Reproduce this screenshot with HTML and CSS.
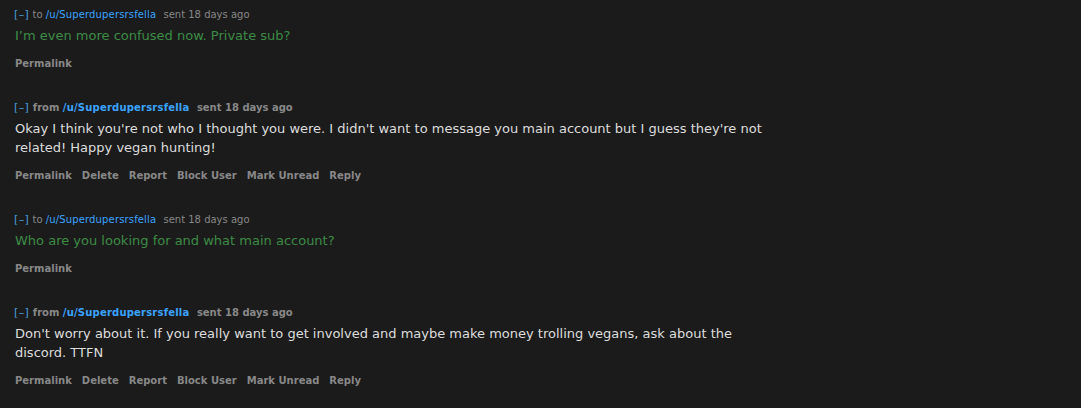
FILE: index.html
```html
<!DOCTYPE html>
<html>
<head>
<meta charset="utf-8">
<link rel="stylesheet" href="styles.css">
</head>
<body>
<div class="thread">
  <div class="message sent">
    <p class="tagline"><a class="expand">[–]</a> to <a class="author">/u/Superdupersrsfella</a> <span class="time">sent 18 days ago</span></p>
    <div class="md">I’m even more confused now. Private sub?</div>
    <ul class="buttons"><li>Permalink</li></ul>
  </div>
  <div class="message recv">
    <p class="tagline"><a class="expand">[–]</a> from <a class="author">/u/Superdupersrsfella</a> <span class="time">sent 18 days ago</span></p>
    <div class="md">Okay I think you're not who I thought you were. I didn't want to message you main account but I guess they're not related! Happy vegan hunting!</div>
    <ul class="buttons"><li>Permalink</li><li>Delete</li><li>Report</li><li>Block User</li><li>Mark Unread</li><li>Reply</li></ul>
  </div>
  <div class="message sent">
    <p class="tagline"><a class="expand">[–]</a> to <a class="author">/u/Superdupersrsfella</a> <span class="time">sent 18 days ago</span></p>
    <div class="md">Who are you looking for and what main account?</div>
    <ul class="buttons"><li>Permalink</li></ul>
  </div>
  <div class="message recv">
    <p class="tagline"><a class="expand">[–]</a> from <a class="author">/u/Superdupersrsfella</a> <span class="time">sent 18 days ago</span></p>
    <div class="md">Don't worry about it. If you really want to get involved and maybe make money trolling vegans, ask about the discord. TTFN</div>
    <ul class="buttons"><li>Permalink</li><li>Delete</li><li>Report</li><li>Block User</li><li>Mark Unread</li><li>Reply</li></ul>
  </div>
</div>
</body>
</html>
```
FILE: styles.css
```css
html, body {
  margin: 0;
  padding: 0;
  background: #1b1b1b;
  font-family: "DejaVu Sans", Verdana, sans-serif;
}
.thread {
  padding: 8px 15px 0 14px;
}
.message {
  margin-bottom: 30px;
}
.tagline {
  margin: 0;
  font-size: 10px;
  line-height: 14px;
  color: #888;
}
.recv .tagline {
  font-weight: bold;
}
.expand {
  color: #4a9fd8;
  font-weight: normal;
  font-size: 11px;
  letter-spacing: 0.4px;
}
.author {
  color: #3aa3ff;
  margin-right: 4px;
  letter-spacing: 0.15px;
}
.recv .author {
  letter-spacing: 0.2px;
}
.md {
  margin-top: 4px;
  margin-left: 1px;
  font-size: 13px;
  line-height: 19px;
  max-width: 770px;
}
.sent .md {
  color: #3c8c46;
}
.recv .md {
  color: #dddddd;
}
.buttons {
  list-style: none;
  margin: 12px 0 0 1px;
  padding: 0;
  display: flex;
  gap: 10px;
  font-size: 10px;
  line-height: 14px;
  font-weight: bold;
  color: #888;
}
```
